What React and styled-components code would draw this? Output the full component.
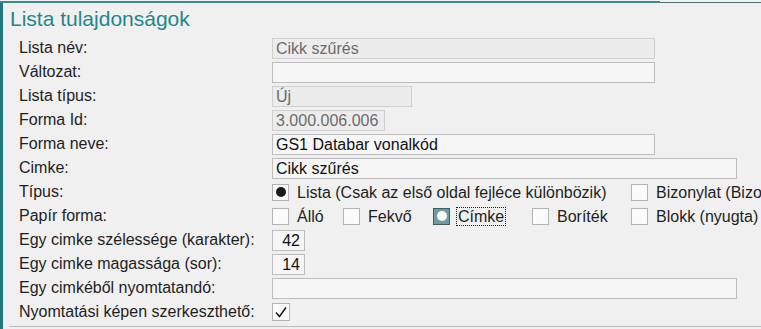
import React from 'react';
import { styled, createGlobalStyle } from 'styled-components';

const GlobalStyle = createGlobalStyle`
  html, body {
    margin: 0;
    padding: 0;
    background: #f0f0f0;
  }
  body {
    font-family: "Liberation Sans", Arial, sans-serif;
  }
`;

const rows = [
  { label: 'Lista név:', value: 'Cikk szűrés', width: 383, disabled: true },
  { label: 'Változat:', value: '', width: 383 },
  { label: 'Lista típus:', value: 'Új', width: 140, disabled: true },
  { label: 'Forma Id:', value: '3.000.006.006', width: 113, disabled: true },
  { label: 'Forma neve:', value: 'GS1 Databar vonalkód', width: 383 },
  { label: 'Cimke:', value: 'Cikk szűrés', width: 465 },
];

const tipus = [
  { text: 'Lista (Csak az első oldal fejléce különbözik)', width: 359, mark: 'dot' },
  { text: 'Bizonylat (Bizonylat)' },
];

const papir = [
  { text: 'Álló', width: 71 },
  { text: 'Fekvő', width: 90 },
  { text: 'Címke', width: 99, mark: 'selected', focus: true },
  { text: 'Boríték', width: 99 },
  { text: 'Blokk (nyugta)' },
];

const Mark = ({ kind }) => (
  <Box $kind={kind}>
    {kind === 'dot' && <Dot $color="#1a1a1a" />}
    {kind === 'selected' && <Dot $color="#ffffff" $size={10} />}
  </Box>
);

const App = () => {
  return (
    <>
      <GlobalStyle />
      <Page>
        <TopStrip>
          <TopLine $w={660} $h={2} $c="#3d8a8c" />
          <TopLine $h={1} $c="#4f6f70" />
        </TopStrip>
        <Panel>
          <Title>Lista tulajdonságok</Title>
          <Form>
            {rows.map((r) => (
              <Row key={r.label}>
                <Label>{r.label}</Label>
                <Field $w={r.width} $disabled={r.disabled}>{r.value}</Field>
              </Row>
            ))}
            <Row>
              <Label>Típus:</Label>
              <Options>
                {tipus.map((o) => (
                  <Option key={o.text} $w={o.width}>
                    <Mark kind={o.mark} />
                    <OptionText>{o.text}</OptionText>
                  </Option>
                ))}
              </Options>
            </Row>
            <Row>
              <Label>Papír forma:</Label>
              <Options>
                {papir.map((o) => (
                  <Option key={o.text} $w={o.width}>
                    <Mark kind={o.mark} />
                    <OptionText $focus={o.focus}>{o.text}</OptionText>
                  </Option>
                ))}
              </Options>
            </Row>
            <Row>
              <Label>Egy cimke szélessége (karakter):</Label>
              <Field $w={33} $right>42</Field>
            </Row>
            <Row>
              <Label>Egy cimke magassága (sor):</Label>
              <Field $w={33} $right>14</Field>
            </Row>
            <Row>
              <Label>Egy cimkéből nyomtatandó:</Label>
              <Field $w={465} />
            </Row>
            <Row>
              <Label>Nyomtatási képen szerkeszthető:</Label>
              <CheckBox>
                <svg width="14" height="14" viewBox="0 0 14 14">
                  <path d="M2 7.5 L5.5 11.5 L12 2.5" fill="none" stroke="#1a1a1a" strokeWidth="1.5" />
                </svg>
              </CheckBox>
            </Row>
          </Form>
          <BottomRule />
        </Panel>
      </Page>
    </>
  );
};

export default App;

const Page = styled.div`
  width: 761px;
  height: 329px;
  overflow: hidden;
  background: #f0f0f0;
  color: #1e1e1e;
  white-space: nowrap;
`;

const TopStrip = styled.div`
  display: flex;
  align-items: flex-end;
  height: 3px;
  background: #f3f3f3;
`;

const TopLine = styled.div`
  width: ${(p) => (p.$w ? `${p.$w}px` : 'auto')};
  flex: ${(p) => (p.$w ? 'none' : '1')};
  height: ${(p) => p.$h}px;
  background: ${(p) => p.$c};
`;

const Panel = styled.div`
  border-left: 3px solid #1f7b7f;
  height: 326px;
  box-sizing: border-box;
  padding-top: 3px;
`;

const Title = styled.h2`
  margin: 0 0 0 7px;
  height: 30px;
  font-size: 21px;
  font-weight: 400;
  line-height: 26px;
  color: #22878a;
`;

const Form = styled.div`
  display: flex;
  flex-direction: column;
  padding-left: 16px;
`;

const Row = styled.div`
  display: flex;
  align-items: center;
  height: 24px;
`;

const Label = styled.div`
  width: 253px;
  flex: none;
  font-size: 16px;
  color: #1e1e1e;
`;

const Field = styled.div`
  box-sizing: border-box;
  width: ${(p) => p.$w}px;
  height: 21px;
  padding: 0 ${(p) => (p.$right ? '4px' : '3px')};
  border: 1px solid ${(p) => (p.$disabled ? '#cfcfcf' : '#bdbdbd')};
  background: ${(p) => (p.$disabled ? '#ececec' : '#f6f6f6')};
  color: ${(p) => (p.$disabled ? '#6b6b6b' : '#111111')};
  font-size: 16px;
  line-height: 19px;
  text-align: ${(p) => (p.$right ? 'right' : 'left')};
`;

const Options = styled.div`
  display: flex;
  align-items: center;
`;

const Option = styled.div`
  display: flex;
  align-items: center;
  gap: 8px;
  width: ${(p) => (p.$w ? `${p.$w}px` : 'auto')};
  flex: none;
`;

const Box = styled.div`
  box-sizing: border-box;
  width: 17px;
  height: 17px;
  display: flex;
  align-items: center;
  justify-content: center;
  border: 1px solid ${(p) => (p.$kind === 'selected' ? '#3f5f60' : '#b3b3b3')};
  background: ${(p) => (p.$kind === 'selected' ? '#6e9c9c' : '#fbfbfb')};
`;

const Dot = styled.div`
  width: ${(p) => p.$size || 10}px;
  height: ${(p) => p.$size || 10}px;
  border-radius: 50%;
  background: ${(p) => p.$color};
`;

const OptionText = styled.span`
  font-size: 16px;
  line-height: 17px;
  padding: 0 1px;
  border: 1px dotted ${(p) => (p.$focus ? '#1e1e1e' : 'transparent')};
  margin-left: -2px;
`;

const CheckBox = styled.div`
  box-sizing: border-box;
  width: 18px;
  height: 18px;
  display: flex;
  align-items: center;
  justify-content: center;
  border: 1px solid #b3b3b3;
  background: #fbfbfb;
`;

const BottomRule = styled.div`
  margin: 2px 0 0 6px;
  height: 1px;
  background: #bcbcbc;
`;
